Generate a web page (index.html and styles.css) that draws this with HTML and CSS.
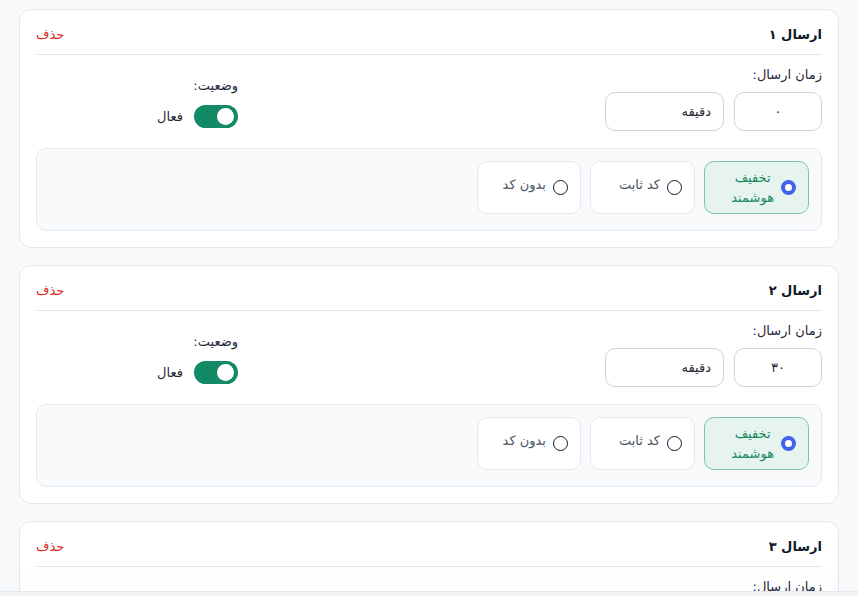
FILE: index.html
```html
<!DOCTYPE html>
<html lang="fa" dir="rtl">
<head>
<meta charset="utf-8">
<title>ارسال‌ها</title>
<link rel="stylesheet" href="styles.css">
</head>
<body>
<div class="list">
  <section class="card">
    <header class="card-head">
      <h3 class="card-title">ارسال ۱</h3>
      <button class="delete">حذف</button>
    </header>
    <div class="card-body">
      <div class="time-group">
        <label class="field-label">زمان ارسال:</label>
        <div class="inputs">
          <div class="input num">۰</div>
          <div class="input unit">دقیقه</div>
        </div>
      </div>
      <div class="status-group">
        <span class="field-label">وضعیت:</span>
        <div class="toggle-row">
          <span class="toggle"><span class="knob"></span></span>
          <span class="toggle-text">فعال</span>
        </div>
      </div>
    </div>
    <div class="options">
      <div class="option selected"><span class="radio"></span><span class="opt-text">تخفیف<br>هوشمند</span></div>
      <div class="option"><span class="radio"></span><span class="opt-text">کد ثابت</span></div>
      <div class="option narrow"><span class="radio"></span><span class="opt-text">بدون کد</span></div>
    </div>
  </section>

  <section class="card">
    <header class="card-head">
      <h3 class="card-title">ارسال ۲</h3>
      <button class="delete">حذف</button>
    </header>
    <div class="card-body">
      <div class="time-group">
        <label class="field-label">زمان ارسال:</label>
        <div class="inputs">
          <div class="input num">۳۰</div>
          <div class="input unit">دقیقه</div>
        </div>
      </div>
      <div class="status-group">
        <span class="field-label">وضعیت:</span>
        <div class="toggle-row">
          <span class="toggle"><span class="knob"></span></span>
          <span class="toggle-text">فعال</span>
        </div>
      </div>
    </div>
    <div class="options">
      <div class="option selected"><span class="radio"></span><span class="opt-text">تخفیف<br>هوشمند</span></div>
      <div class="option"><span class="radio"></span><span class="opt-text">کد ثابت</span></div>
      <div class="option narrow"><span class="radio"></span><span class="opt-text">بدون کد</span></div>
    </div>
  </section>

  <section class="card">
    <header class="card-head">
      <h3 class="card-title">ارسال ۳</h3>
      <button class="delete">حذف</button>
    </header>
    <div class="card-body">
      <div class="time-group">
        <label class="field-label">زمان ارسال:</label>
      </div>
    </div>
  </section>
</div>
<div class="footer-bar"></div>
</body>
</html>
```

FILE: styles.css
```css
* { box-sizing: border-box; }
html, body { margin: 0; padding: 0; }
body {
  background: #f8fafc;
  font-family: "DejaVu Sans", "Noto Sans", sans-serif;
  color: #1f2937;
  overflow: hidden;
  height: 596px;
}
.list {
  display: flex;
  flex-direction: column;
  gap: 17px;
  padding: 9px 19px 0 19px;
}
.card {
  background: #fff;
  border: 1px solid #e2e8f0;
  border-radius: 12px;
  padding: 0 16px 16px;
}
.card-head {
  display: flex;
  justify-content: space-between;
  align-items: center;
  padding: 15px 0 9px;
  border-bottom: 1px solid #e2e8f0;
}
.card-title {
  margin: 0;
  font-size: 13px;
  font-weight: bold;
  line-height: 20px;
  color: #0f172a;
}
.delete {
  border: 0;
  background: none;
  padding: 0;
  font: inherit;
  font-size: 13px;
  line-height: 20px;
  color: #dc2626;
}
.card-body {
  display: flex;
  align-items: flex-start;
  padding-top: 10px;
}
.field-label {
  display: block;
  font-size: 13px;
  line-height: 20px;
  color: #1f2937;
}
.time-group { width: 217px; }
.inputs {
  display: flex;
  gap: 10px;
  margin-top: 7px;
}
.input {
  height: 39px;
  border: 1px solid #cbd5e1;
  border-radius: 10px;
  font-size: 13px;
  line-height: 37px;
  color: #1f2937;
  background: #fff;
}
.input.num { width: 88px; text-align: center; }
.input.unit { width: 119px; padding-right: 12px; text-align: right; }
.status-group {
  margin-right: 367px;
  margin-top: 11px;
  display: flex;
  flex-direction: column;
  align-items: flex-start;
  gap: 9px;
}
.toggle-row {
  display: flex;
  align-items: center;
  gap: 11px;
}
.toggle {
  width: 44px;
  height: 23px;
  border-radius: 12px;
  background: #138a66;
  display: flex;
  align-items: center;
  padding-right: 4px;
}
.knob {
  width: 17px;
  height: 17px;
  border-radius: 50%;
  background: #fff;
}
.toggle-text {
  font-size: 13px;
  line-height: 20px;
  color: #1f2937;
}
.options {
  margin-top: 17px;
  background: #f8fafc;
  border: 1px solid #e2e8f0;
  border-radius: 10px;
  padding: 12px 12px 16px;
  display: flex;
  gap: 9px;
}
.option {
  width: 105px;
  height: 53px;
  border: 1px solid #e2e8f0;
  border-radius: 10px;
  background: #fff;
  display: flex;
  align-items: center;
  gap: 7px;
  padding-right: 12px;
  font-size: 13px;
  line-height: 20px;
  color: #4b5563;
}
.option.narrow { width: 104px; }
.option .opt-text { margin-top: -5px; }
.option.selected {
  background: #e6f3ef;
  border-color: #7cc6a6;
  color: #178a5e;
}
.option.selected .opt-text { margin-top: 0; text-align: center; }
.radio {
  width: 15px;
  height: 15px;
  border-radius: 50%;
  border: 1px solid #111827;
  background: #fff;
  flex: none;
}
.option.selected .radio {
  border: 4px solid #4361ee;
}
.footer-bar {
  position: fixed;
  left: 0;
  right: 0;
  bottom: 0;
  height: 5px;
  background: #f3f4f6;
  border-top: 1px solid #e2e8f0;
  box-shadow: 0 -8px 18px rgba(15, 23, 42, 0.04);
}
```
